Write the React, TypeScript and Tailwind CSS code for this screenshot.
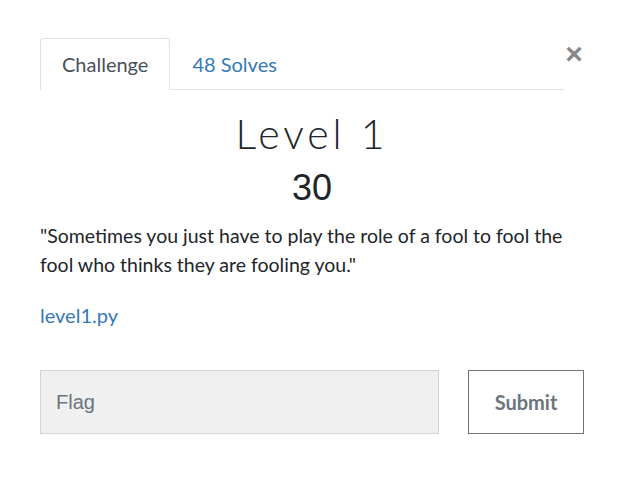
import React from "react";

export default function App() {
  return (
    <div className="w-[620px] h-[478px] bg-white relative" style={{ fontFamily: "Lato, 'Noto Sans', sans-serif" }}>
      <div className="pt-[38px] pl-[40px] pr-[36px]">
        <div className="flex items-start">
          <ul className="flex w-[525px] border-b border-[#dee2e6]">
            <li className="-mb-px px-[21px] h-[52px] flex items-center border border-[#dee2e6] border-b-white rounded-t-[4px] text-[20px] text-[#495057] bg-white">
              Challenge
            </li>
            <li className="px-[22px] h-[51px] flex items-center text-[20px] text-[#337ab7]">
              48 Solves
            </li>
          </ul>
          <div className="flex-1 flex justify-end pt-[1px]">
            <button className="text-[30px] leading-none font-bold text-[#888] w-[20px]" style={{ fontFamily: "'Liberation Sans', Arial, sans-serif" }}>
              ×
            </button>
          </div>
        </div>

        <div>
          <h2 className="text-center text-[41px] leading-none font-light text-[#212529] tracking-[4px] mt-[23px]">
            Level 1
          </h2>
          <div className="text-center text-[36px] leading-none text-[#212529] mt-[16px]" style={{ fontFamily: "'Liberation Sans', Arial, sans-serif" }}>
            30
          </div>
          <p className="mt-[15px] text-[19.5px] leading-[29px] text-[#212529]">
            "Sometimes you just have to play the role of a fool to fool the fool who thinks they are fooling you."
          </p>
          <div className="mt-[21px] text-[20px] leading-[30px] text-[#337ab7]">level1.py</div>

          <div className="mt-[40px] flex items-center">
            <div
              className="w-[399px] h-[64px] border border-[#d3d3d3] bg-[#f0f0f0] flex items-center pl-[15px] text-[20px] text-[#6c757d]"
              style={{ fontFamily: "'Liberation Sans', Arial, sans-serif" }}
            >
              Flag
            </div>
            <button className="ml-[29px] w-[116px] h-[64px] border border-[#6c757d] text-[20px] font-bold text-[#6c757d] bg-white">
              Submit
            </button>
          </div>
        </div>
      </div>
    </div>
  );
}
